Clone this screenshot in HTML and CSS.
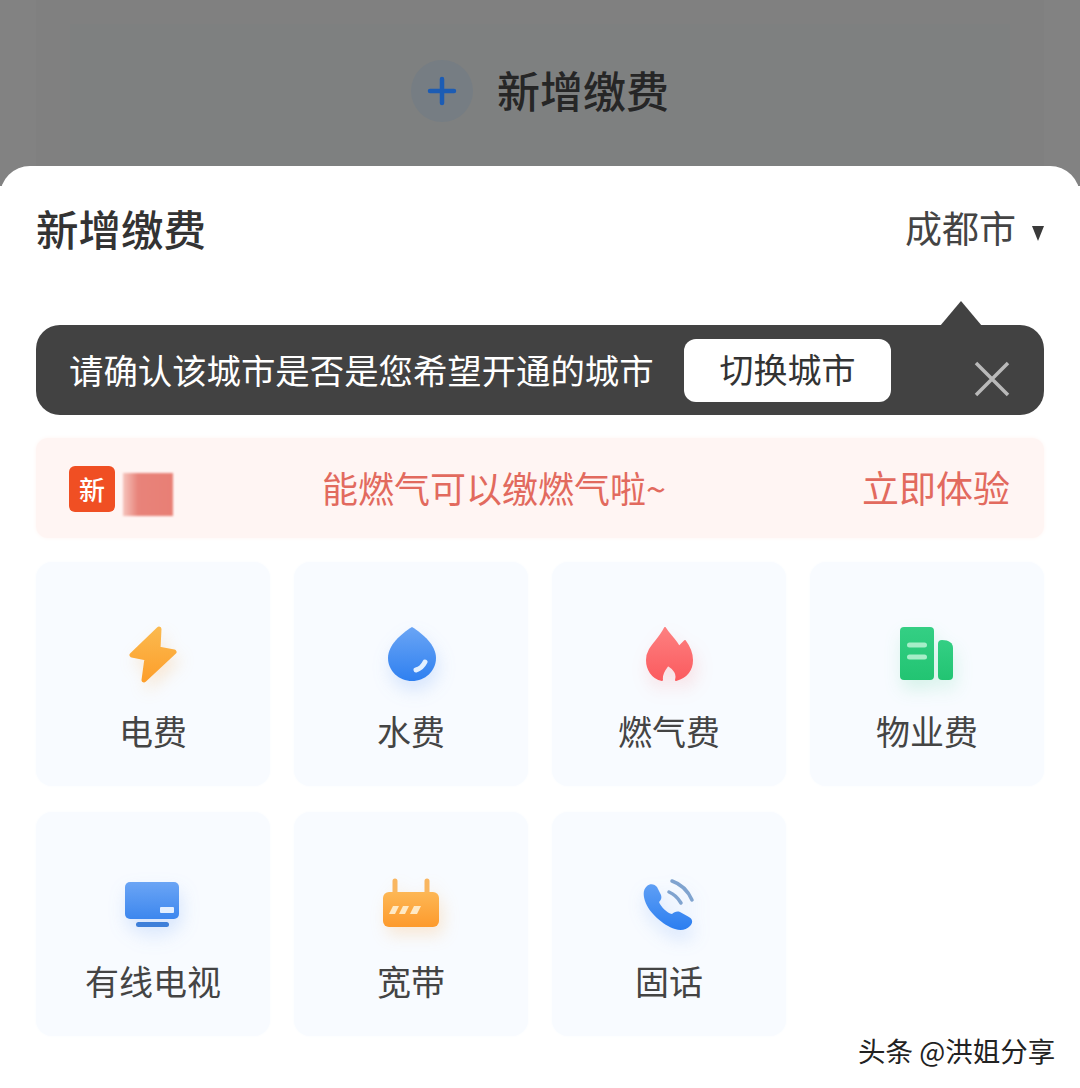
FILE: index.html
```html
<!DOCTYPE html>
<html lang="zh-CN">
<head>
    <title>新增缴费</title>
    <link rel="stylesheet" href="styles.css">
</head>
<body>
<div class="backdrop">
    <div class="backdrop-card">
        <div class="add-box">
            <span class="add-circle">
                <svg width="30" height="30" viewBox="0 0 30 30"><path d="M15 3v24M3 15h24" stroke="#1c5cb4" stroke-width="4.5" stroke-linecap="round"/></svg>
            </span>
            <span class="add-text">新增缴费</span>
        </div>
    </div>
</div>

<div class="sheet">
    <div class="sheet-header">
        <h2 class="sheet-title">新增缴费</h2>
        <div class="city">成都市<span class="city-arrow"></span></div>
    </div>

    <div class="tip">
        <span class="tip-text">请确认该城市是否是您希望开通的城市</span>
        <button class="tip-button">切换城市</button>
        <svg class="tip-close" width="38" height="38" viewBox="0 0 38 38"><path d="M3 3l32 32M35 3L3 35" stroke="#b9b9b9" stroke-width="3.5"/></svg>
    </div>

    <div class="banner">
        <span class="banner-tag">新</span>
        <span class="banner-mask"></span>
        <span class="banner-text">能燃气可以缴燃气啦~</span>
        <span class="banner-link">立即体验</span>
    </div>

    <div class="grid">
        <div class="cell">
            <svg class="icon icon-orange" viewBox="0 0 60 60">
                <defs><linearGradient id="g1" x1="0" y1="0" x2="0" y2="1"><stop offset="0" stop-color="#fbb94e"/><stop offset="1" stop-color="#fd9f2c"/></linearGradient></defs>
                <path d="M36 4L9 30l15 3-3 22 30-28-16-3z" fill="url(#g1)" stroke="url(#g1)" stroke-width="5" stroke-linejoin="round"/>
            </svg>
            <div class="cell-label">电费</div>
        </div>
        <div class="cell">
            <svg class="icon icon-blue" viewBox="0 0 60 60">
                <defs><linearGradient id="g2" x1="0" y1="0" x2="0" y2="1"><stop offset="0" stop-color="#6aa5f5"/><stop offset="1" stop-color="#2f80f0"/></linearGradient></defs>
                <path d="M31 2C20 9 7 20 7 33c0 13 11 23 24 23s24-10 24-23C55 20 42 9 31 2z" fill="url(#g2)"/>
                <path d="M35 45c4-1 7-4 9-8" fill="none" stroke="#e2f0ff" stroke-width="5" stroke-linecap="round"/>
            </svg>
            <div class="cell-label">水费</div>
        </div>
        <div class="cell">
            <svg class="icon icon-red" viewBox="0 0 60 60">
                <defs><linearGradient id="g3" x1="0" y1="0" x2="0" y2="1"><stop offset="0" stop-color="#fd8080"/><stop offset="1" stop-color="#fb5b5f"/></linearGradient></defs>
                <path d="M26 3C30 10 36 14 40 22 42 20 44 18 46 16 52 24 53 30 53 35 53 45 47 52 37 55 39 48 35 44 29 40 26 44 22 48 23 55 13 53 8 44 8 35 8 22 20 16 26 3z" fill="url(#g3)" stroke="url(#g3)" stroke-width="2" stroke-linejoin="round"/>
            </svg>
            <div class="cell-label">燃气费</div>
        </div>
        <div class="cell">
            <svg class="icon icon-green" viewBox="0 0 60 60">
                <defs><linearGradient id="g4" x1="0" y1="0" x2="0" y2="1"><stop offset="0" stop-color="#34cf84"/><stop offset="1" stop-color="#22c472"/></linearGradient></defs>
                <rect x="3" y="2" width="34" height="53" rx="4" fill="url(#g4)"/>
                <path d="M41 19a4 4 0 0 1 4-4c7 0 11 3 11 8v28a4 4 0 0 1-4 4h-7a4 4 0 0 1-4-4z" fill="url(#g4)"/>
                <path d="M12.500 20h15M12.500 32h15" stroke="#a6eec8" stroke-width="5" stroke-linecap="round"/>
            </svg>
            <div class="cell-label">物业费</div>
        </div>
        <div class="cell">
            <svg class="icon icon-blue" viewBox="0 0 60 60">
                <defs><linearGradient id="g5" x1="0" y1="0" x2="0" y2="1"><stop offset="0" stop-color="#6ba5f5"/><stop offset="1" stop-color="#3d87ee"/></linearGradient></defs>
                <rect x="2" y="7" width="54" height="37" rx="5" fill="url(#g5)"/>
                <rect x="37" y="32" width="14" height="6" rx="1" fill="#e3efff"/>
                <rect x="13" y="47" width="33" height="5" rx="2.500" fill="#3e7fd9"/>
            </svg>
            <div class="cell-label">有线电视</div>
        </div>
        <div class="cell">
            <svg class="icon icon-orange" viewBox="0 0 60 60">
                <defs><linearGradient id="g6" x1="0" y1="0" x2="0" y2="1"><stop offset="0" stop-color="#fdb755"/><stop offset="1" stop-color="#fd9a2c"/></linearGradient></defs>
                <path d="M14 6v12M46 6v12" stroke="#f9b660" stroke-width="5" stroke-linecap="round"/>
                <rect x="2" y="17" width="56" height="35" rx="6" fill="url(#g6)"/>
                <path d="M12 31h6l-4 8H8zM22 31h6l-4 8h-6zM33 31h7l-4 8h-7z" fill="#ffe9c4"/>
            </svg>
            <div class="cell-label">宽带</div>
        </div>
        <div class="cell">
            <svg class="icon icon-blue" viewBox="0 0 60 60">
                <defs><linearGradient id="g7" x1="0" y1="0" x2="0" y2="1"><stop offset="0" stop-color="#5f9ff5"/><stop offset="1" stop-color="#2b7ef0"/></linearGradient></defs>
                <path d="M8 11C11 8 16 9 18 12L22 20C23 23 22 25 20 27 22 32 28 38 33 39 35 37 38 36 41 37L50 42C54 44 54 48 51 51 47 55 42 56 36 54 24 50 10 38 6 26 4 19 4 15 8 11z" fill="url(#g7)"/>
                <path d="M33 6c9 3 16 10 20 19M30 17c5 2 9 6 12 11" fill="none" stroke="#7fa3cf" stroke-width="3.500" stroke-linecap="round"/>
            </svg>
            <div class="cell-label">固话</div>
        </div>
    </div>
</div>

<div class="watermark">头条 @洪姐分享</div>
</body>
</html>
```

FILE: styles.css
```css
body {
    font-family: "Noto Sans CJK SC", "Noto Sans", sans-serif;
    background-color: #fff;
    margin: 0;
    padding: 0;
    width: 1080px;
    height: 1088px;
    overflow: hidden;
    position: relative;
}
.backdrop {
    height: 186px;
    margin-bottom: -20px;
    padding: 0 36px;
    box-sizing: border-box;
    background-color: #828282;
}
.backdrop-card {
    height: 100%;
    padding: 24px 34px 0;
    box-sizing: border-box;
    background-color: #808080;
}
.add-box {
    height: 100%;
    padding-bottom: 29px;
    box-sizing: border-box;
    background-color: #7e8080;
    display: flex;
    justify-content: center;
    align-items: center;
    gap: 24px;
}
.add-circle {
    width: 62px;
    height: 62px;
    border-radius: 50%;
    background-color: #767d83;
    display: flex;
    justify-content: center;
    align-items: center;
}
.add-text {
    margin-bottom: 4px;
    font-size: 43px;
    font-weight: 500;
    color: #262626;
}
.sheet {
    position: relative;
    height: 922px;
    padding: 0 36px;
    box-sizing: border-box;
    background-color: #fff;
    border-radius: 30px 30px 0 0;
}
.sheet-header {
    height: 128px;
    padding-bottom: 6px;
    box-sizing: border-box;
    margin-bottom: 31px;
    display: flex;
    justify-content: space-between;
    align-items: center;
}
.sheet-title {
    margin: 0;
    font-size: 42.5px;
    font-weight: 500;
    color: #333;
}
.city {
    font-size: 37px;
    color: #444;
    display: flex;
    align-items: center;
}
.city-arrow {
    width: 0;
    height: 0;
    margin-left: 16px;
    margin-top: 12px;
    border-left: 6.5px solid transparent;
    border-right: 6.5px solid transparent;
    border-top: 15px solid #3a3a3a;
}
.tip {
    position: relative;
    height: 90px;
    padding: 0 33px 0 33px;
    background-color: #424242;
    border-radius: 24px;
    display: flex;
    align-items: center;
}
.tip::before {
    content: "";
    position: absolute;
    top: -24px;
    right: 62px;
    width: 0;
    height: 0;
    border-left: 21px solid transparent;
    border-right: 21px solid transparent;
    border-bottom: 25px solid #424242;
}
.tip-text {
    width: 586px;
    padding-bottom: 3px;
    font-size: 34.4px;
    color: #fff;
    white-space: nowrap;
}
.tip-button {
    width: 207px;
    height: 63px;
    margin-left: 29px;
    margin-top: 1px;
    padding: 0 0 4px;
    font-family: inherit;
    font-size: 34px;
    color: #333;
    background-color: #fff;
    border: none;
    border-radius: 12px;
}
.tip-close {
    margin-left: auto;
    margin-top: 18px;
}
.banner {
    height: 100px;
    margin-top: 23px;
    padding: 0 34px 0 33px;
    box-sizing: border-box;
    background-color: #fff5f3;
    border-radius: 12px;
    box-shadow: 0 0 4px #fff5f3;
    display: flex;
    align-items: center;
}
.banner-tag {
    width: 46px;
    height: 46px;
    margin-top: 1px;
    background-color: #f04f23;
    border-radius: 6px;
    color: #fff;
    font-size: 26px;
    font-weight: 500;
    text-align: center;
    line-height: 46px;
}
.banner-mask {
    width: 50px;
    height: 43px;
    margin-left: 8px;
    margin-top: 13px;
    background: linear-gradient(to right, #f6c4bd, #e8837a 30%, #e87f75);
    filter: blur(1px);
}
.banner-text {
    margin-left: 149px;
    padding-bottom: 2px;
    font-size: 36px;
    color: #e26a5e;
}
.banner-link {
    margin-left: auto;
    padding-bottom: 2px;
    font-size: 37px;
    color: #e26a5e;
}
.grid {
    margin-top: 24px;
    display: grid;
    grid-template-columns: repeat(4, 234px);
    grid-auto-rows: 224px;
    column-gap: 24px;
    row-gap: 26px;
}
.cell {
    padding-top: 63px;
    box-sizing: border-box;
    background-color: #f8fbff;
    border-radius: 16px;
    box-shadow: 0 0 3px #f8fbff;
    text-align: center;
}
.icon {
    display: block;
    width: 60px;
    height: 60px;
    margin: 0 auto;
}
.icon-orange {
    filter: drop-shadow(4px 8px 8px rgba(250, 170, 70, 0.22));
}
.icon-blue {
    filter: drop-shadow(2px 9px 9px rgba(60, 130, 240, 0.18));
}
.icon-red {
    filter: drop-shadow(3px 9px 9px rgba(250, 90, 90, 0.16));
}
.icon-green {
    filter: drop-shadow(2px 9px 9px rgba(40, 200, 120, 0.16));
}
.cell-label {
    margin-top: 22px;
    font-size: 34px;
    line-height: 48px;
    color: #444;
}
.watermark {
    position: absolute;
    left: 858px;
    top: 1030px;
    font-size: 27.5px;
    line-height: 40px;
    color: #222;
    white-space: nowrap;
    text-shadow: 1px 1px 0 #fff, -1px -1px 0 #fff;
}
```
